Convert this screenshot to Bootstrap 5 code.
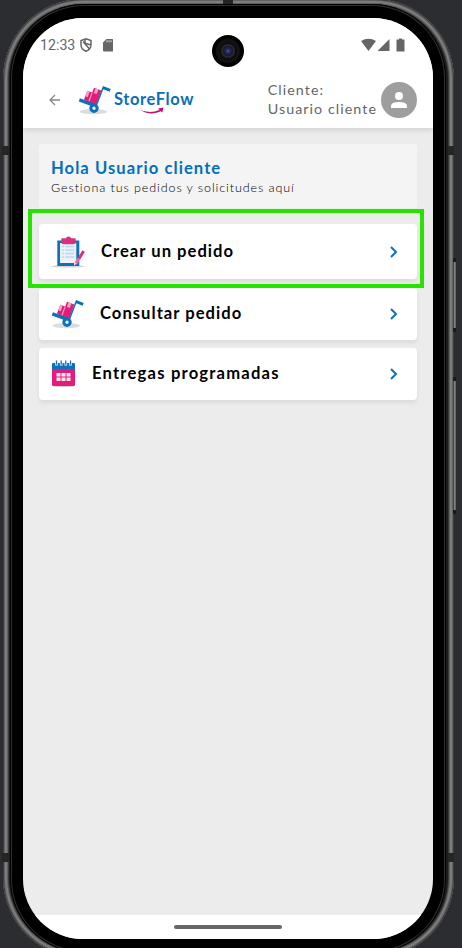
<!DOCTYPE html>
<html lang="es">
<head>
<meta charset="utf-8">
<meta name="viewport" content="width=device-width, initial-scale=1">
<title>StoreFlow</title>
<link rel="stylesheet" href="https://cdn.jsdelivr.net/npm/bootstrap@5.3.0/dist/css/bootstrap.min.css">
<style>
html,body{height:100%}
body{background:#2b2d31;font-family:Lato,"Noto Sans",sans-serif;overflow:hidden;color:#000}
.stage{height:948px;width:462px;overflow:hidden}
.phone{width:451px;height:959px;margin:-1px 0 0 3px;border-radius:80px;padding:5px 8px 5px 7px;background:#1c1c1c;box-shadow:inset 0 0 0 1px #3c3c3c,inset 0 0 0 2px #626262,inset 0 0 0 4px #7c7c7c,inset 0 0 0 5px #606060,inset 0 0 0 6px #3a3a3a}
.bezel{background:#000;border-radius:74px;padding:14px 13px;box-shadow:inset 0 0 0 1px #000,inset 0 0 0 2px #303030;height:949px}
.screen{width:410px;height:921px;border-radius:60px;background:#ececec;overflow:hidden}
.statusbar{height:54px;padding:0 28px 0 17px;color:#666;font:14.2px/1 Roboto,sans-serif;flex:none;background:#fff}
.appbar{height:56px;padding:0 16px 0 25px;background:#fff;box-shadow:0 4px 4px -1px rgba(0,0,0,.09);flex:none;z-index:1}
.trolley{margin-left:16px}
.brand-name{font-size:16.5px;font-weight:700;color:#0a6fb8;line-height:18px;letter-spacing:.6px;margin-left:2px}
.brand{margin-top:-2px}
.smile{left:27px;top:20px}
.client{font-size:14.3px;line-height:19px;color:#666;letter-spacing:1.05px;margin:-2px 4px 0 0}
.avatar{width:36px;height:36px;background:#9e9e9e}
.hello{height:64px;background:#f4f4f4;border-radius:4px;padding:14px 12px}
.hello h1{font-size:16.6px;line-height:20px;font-weight:700;color:#0070ba;margin:0;letter-spacing:1.06px}
.hello p{font-size:12.5px;line-height:18px;color:#000;font-weight:300;margin:1px 0 0;letter-spacing:.91px;font-variant-ligatures:none}
.tile{background:#fff;border-radius:4px;box-shadow:0 3px 4px rgba(0,0,0,.07);color:#000;height:52px;padding:0 16px 1px 12px;font-size:16.6px;font-weight:700;text-decoration:none;letter-spacing:1.03px}
.tile.tall{height:55px;margin-bottom:1px;padding-bottom:0}
.tile.wide{letter-spacing:1.2px}
.gap-a{margin-right:15px}
.gap-b{margin-right:16px}
.highlight{left:28px;top:209px;width:396px;height:79px;border:4px solid #27e400;z-index:3}
.camera{left:212px;top:35px;width:32px;height:32px;background:radial-gradient(circle,#6b4ab0 0,#232a55 2px,#16182c 5px,#303034 6px,#0c0c0d 7.5px,#141414 11px,#000 13px)}
.gesture{height:24px;background:#fff;flex:none}
.gesture span{width:108px;height:4px;border-radius:2px;background:#666}
.seam{width:7px;height:9px;background:#252525}
.seam-l{left:2px}.seam-r{left:448px;width:6px}
.seam-hi{top:146px}.seam-lo{top:853px}
.seam-top{left:223px;top:0;width:10px;height:4px}
.key{left:453px;width:3px;border-radius:1px;background:linear-gradient(90deg,#222,#999 60%,#444);border-top:4px solid #18191b;border-bottom:4px solid #18191b}
.key-power{top:258px;height:74px}
.key-volume{top:377px;height:137px}
</style>
</head>
<body>
<svg class="d-none">
  <symbol id="trolley" viewBox="0 0 34 30">
    <ellipse cx="15.300" cy="26.700" rx="13.500" ry="2.600" fill="#dcdcdc"/>
    <path fill="#e31c79" d="M6 14.500 9.300 5.700 14.200 7.600 16 2.700 23.300 5.400 18.200 19.800 10.700 17.500Z"/>
    <path fill="#f3a3c8" d="M9.300 5.700 11.700 6.600 9.700 12.200 7.400 11.300ZM17.500 3.200 20.500 4.400 18.700 9 15.800 8ZM13.700 7.500 14.600 8 11.500 16.500 10.300 16Z"/>
    <path fill="none" stroke="#0d71b9" stroke-width="3.300" d="M1.300 14.900 17 20.600"/>
    <path fill="none" stroke="#0d71b9" stroke-width="1.500" d="M18.500 20 24.900 3.300"/>
    <path fill="none" stroke="#0d71b9" stroke-width="3" d="M24.500 2.400 32.200 5.300"/>
    <circle cx="16" cy="23.200" r="3.200" fill="#e8f0f6" stroke="#0d71b9" stroke-width="3"/>
  </symbol>
</svg>
<div class="stage position-relative">
<div class="phone position-relative">
<div class="bezel position-relative">
<main class="screen d-flex flex-column">
  <div class="statusbar d-flex align-items-center">
    <span>12:33</span>
    <svg class="ms-1" width="14" height="16" viewBox="0 0 14 16" fill="none" stroke="#666" stroke-width="1.500"><path d="M7 1.700 12 3.600V7.500C12 10.800 10 13.200 7 14.200 4 13.200 2 10.800 2 7.500V3.600ZM4 4.500 10.500 12M6 2.200v4l6 1.800"/></svg>
    <svg class="ms-2" width="14" height="13" viewBox="-2 0 14 13"><path fill="#666" d="M3.500 0H9.500Q10 0 10 1V12Q10 12.500 9 12.500H1Q0 12.500 0 11.500V3.500Z"/><path stroke="#fff" stroke-width=".8" d="M4 1.300v2M6 1.300v2M8 1.300v2"/></svg>
    <svg class="ms-auto" width="44" height="14" viewBox="0 0 44 14" fill="#666"><path d="M0 3Q7.500-1.500 15 3L7.500 13Z"/><path d="M28.500 1V13H16.500Z"/><path d="M35.500 1.500h2.500V.5h3v1h2.500V13.500h-8Z"/></svg>
  </div>
  <header class="appbar d-flex align-items-center position-relative">
    <svg width="14" height="14" viewBox="0 0 14 14" fill="none" stroke="#888" stroke-width="1.300"><path d="M12 7H2M7 2 2 7l5 5"/></svg>
    <svg class="trolley" width="34" height="30"><use href="#trolley"/></svg>
    <div class="brand position-relative"><span class="brand-name">StoreFlow</span>
      <svg class="smile position-absolute" width="25" height="9" viewBox="0 0 25 9" fill="#c4106b"><path d="M0 2.200Q10 7.500 20.500 3L19.200 1.500 24.500.5 23.300 5.500 22 4.300Q11 9.500 0 2.200Z"/></svg>
    </div>
    <div class="client ms-auto">Cliente:<br>Usuario cliente</div>
    <div class="avatar rounded-circle d-flex align-items-center justify-content-center"><svg width="18" height="18" viewBox="0 0 18 18" fill="#fff"><circle cx="9" cy="5" r="4"/><path d="M1 17v-2q0-4 8-4t8 4v2Z"/></svg></div>
  </header>
  <div class="flex-grow-1 p-3 d-flex flex-column">
    <section class="hello"><h1>Hola Usuario cliente</h1><p>Gestiona tus pedidos y solicitudes aquí</p></section>
    <a href="#" class="tile tall mt-3 d-flex align-items-center">
      <svg class="gap-a" width="35" height="32" viewBox="1 0 35 32"><ellipse cx="18" cy="30.300" rx="17" ry="1.200" fill="#d3d3d3"/><path fill="#0d71b9" d="M7.300 4.500h22v25.500h-22Z"/><path fill="#edf1f5" d="M10 7h16.300v20H10Z"/><path stroke="#b5daf2" stroke-width="1.300" stroke-dasharray="2 1.200 9 20" d="M12 10.500h13M12 14h13M12 17.500h13M12 21h13"/><path fill="#d9307f" d="M11.300 3.300q0-1 1-1h3.500q.7-1.800 2.700-1.800t2.700 1.800h3.500q1 0 1 1v4q-1 1-3 1h-9q-2.400 0-2.400-2Z"/><path stroke="#e56fa6" stroke-width="3" d="m25.500 28 4-6.500"/><path stroke="#d9307f" stroke-width="3" d="m29 22.500 4.700-7.500"/><path fill="#f4d1e1" d="m24 26 2.500 1.500-2.500 2.500Z"/></svg>
      Crear un pedido<svg class="ms-auto" width="14" height="12" viewBox="0 0 14 12"><path fill="none" stroke="#0d71b9" stroke-width="2" d="M4 1 9 6 4 11"/></svg></a>
    <a href="#" class="tile mt-2 d-flex align-items-center">
      <svg class="gap-b" width="33" height="30" viewBox="0 0 33 30"><use href="#trolley" width="34" height="30"/></svg>
      Consultar pedido<svg class="ms-auto" width="14" height="12" viewBox="0 0 14 12"><path fill="none" stroke="#0d71b9" stroke-width="2" d="M4 1 9 6 4 11"/></svg></a>
    <a href="#" class="tile wide mt-2 d-flex align-items-center">
      <svg class="gap-b" width="25" height="28" viewBox="0 0 25 28"><ellipse cx="12.500" cy="26" rx="11" ry="1.200" fill="#ccc"/><rect x="1" y="3" width="23" height="23" rx="1.500" fill="#e31c79"/><path fill="#0d71b9" d="M1 4.500Q1 3 2.500 3h20Q24 3 24 4.500V9H1Z"/><path stroke="#fff" stroke-width="2.600" d="M5.500 2v3.500M10.200 2v3.500M14.800 2v3.500M19.500 2v3.500"/><path stroke="#0d71b9" stroke-width="1.300" d="M5.500.5v4.300M10.200.5v4.300M14.800.5v4.300M19.500.5v4.300"/><path fill="#fce6f0" d="M5.500 13h4v3.500h-4ZM10.500 13h4v3.500h-4ZM15.500 13h4v3.500h-4ZM5.500 17.500h4V21h-4ZM10.500 17.500h4V21h-4ZM15.500 17.500h4V21h-4Z"/></svg>
      Entregas programadas<svg class="ms-auto" width="14" height="12" viewBox="0 0 14 12"><path fill="none" stroke="#0d71b9" stroke-width="2" d="M4 1 9 6 4 11"/></svg></a>
  </div>
  <div class="gesture d-flex align-items-center justify-content-center"><span></span></div>
</main>
</div>
</div>
<div class="seam seam-l seam-hi position-absolute"></div><div class="seam seam-l seam-lo position-absolute"></div>
<div class="seam seam-r seam-hi position-absolute"></div><div class="seam seam-r seam-lo position-absolute"></div>
<div class="seam seam-top position-absolute"></div>
<div class="key key-power position-absolute"></div><div class="key key-volume position-absolute"></div>
<div class="highlight position-absolute"></div>
<div class="camera position-absolute rounded-circle"></div>
</div>
<script src="https://cdn.jsdelivr.net/npm/bootstrap@5.3.0/dist/js/bootstrap.bundle.min.js"></script>
</body>
</html>
